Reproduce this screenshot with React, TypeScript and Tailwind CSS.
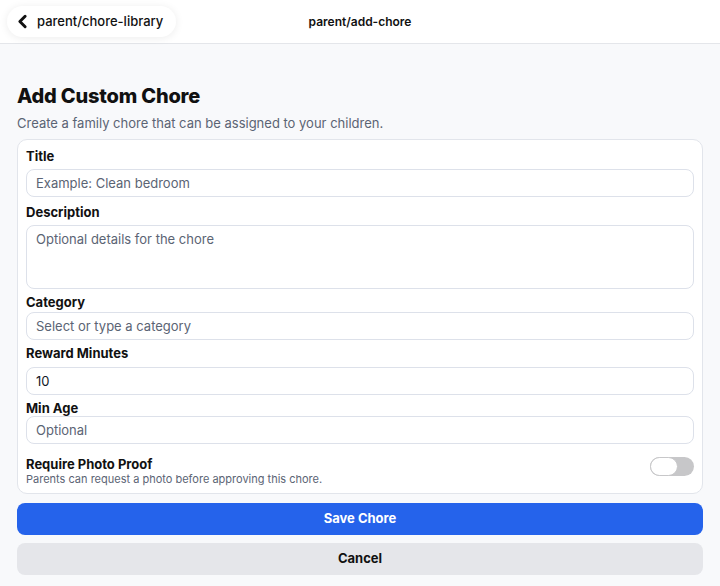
import { ChevronLeft } from "lucide-react";

const inputClass =
  "w-full rounded-lg border border-[#dde1ea] bg-white px-[9px] text-[13px] text-[#111827] placeholder:text-[#5b6474] outline-none";

function Label({ children, className = "" }: { children: React.ReactNode; className?: string }) {
  return (
    <div className={`text-[13px] font-bold leading-[16px] text-[#111] ${className}`}>
      {children}
    </div>
  );
}

export default function App() {
  return (
    <div className="min-h-[586px] bg-[#f8f9fb] font-['Inter',sans-serif] text-[#111]">
      <header className="relative flex h-[44px] items-center border-b border-[#e4e6ea] bg-white px-[7px]">
        <button className="flex h-[31px] items-center gap-[4px] rounded-full bg-white pl-[5px] pr-[13px] shadow-[0_1px_8px_rgba(0,0,0,0.08)]">
          <ChevronLeft className="h-[21px] w-[21px] text-[#111]" strokeWidth={3.4} />
          <span className="text-[13px] font-medium text-[#111]">parent/chore-library</span>
        </button>
        <div className="absolute left-1/2 -translate-x-1/2 text-[12px] font-semibold text-[#111]">
          parent/add-chore
        </div>
      </header>

      <main className="px-[17px] pt-[39px]">
        <h1 className="text-[20px] font-extrabold leading-[26px] tracking-[-0.2px] text-[#111]">
          Add Custom Chore
        </h1>
        <p className="mt-[6px] text-[13px] leading-[16px] text-[#5b6474]">
          Create a family chore that can be assigned to your children.
        </p>

        <div className="mt-[8px] rounded-[10px] border border-[#e2e5eb] bg-white px-[8px] pb-[7px] pt-[8px]">
          <Label>Title</Label>
          <input className={`${inputClass} mt-[5px] h-[28px]`} placeholder="Example: Clean bedroom" />

          <Label className="mt-[7px]">Description</Label>
          <textarea
            className={`${inputClass} mt-[5px] block h-[64px] resize-none py-[4px]`}
            placeholder="Optional details for the chore"
          />

          <Label className="mt-[5px]">Category</Label>
          <input className={`${inputClass} mt-[2px] h-[28px]`} placeholder="Select or type a category" />

          <Label className="mt-[5px]">Reward Minutes</Label>
          <input className={`${inputClass} mt-[6px] h-[28px]`} defaultValue="10" />

          <Label className="mt-[5px]">Min Age</Label>
          <input className={`${inputClass} mt-0 h-[28px]`} placeholder="Optional" />

          <div className="mt-[12px] flex items-start justify-between">
            <div>
              <Label>Require Photo Proof</Label>
              <div className="text-[11px] leading-[14px] text-[#5b6474]">
                Parents can request a photo before approving this chore.
              </div>
            </div>
            <div className="mt-[1px] flex h-[19px] w-[44px] items-center rounded-full bg-[#c7c7c9]">
              <div className="h-[19px] w-[28px] rounded-full border border-[#c7c7c9] bg-white" />
            </div>
          </div>
        </div>

        <button className="mt-[9px] flex h-[32px] w-full items-center justify-center rounded-lg bg-[#2563eb] text-[13px] font-bold text-white">
          Save Chore
        </button>
        <button className="mt-[8px] flex h-[32px] w-full items-center justify-center rounded-lg bg-[#e5e6ea] text-[13px] font-bold text-[#111]">
          Cancel
        </button>
      </main>
    </div>
  );
}
